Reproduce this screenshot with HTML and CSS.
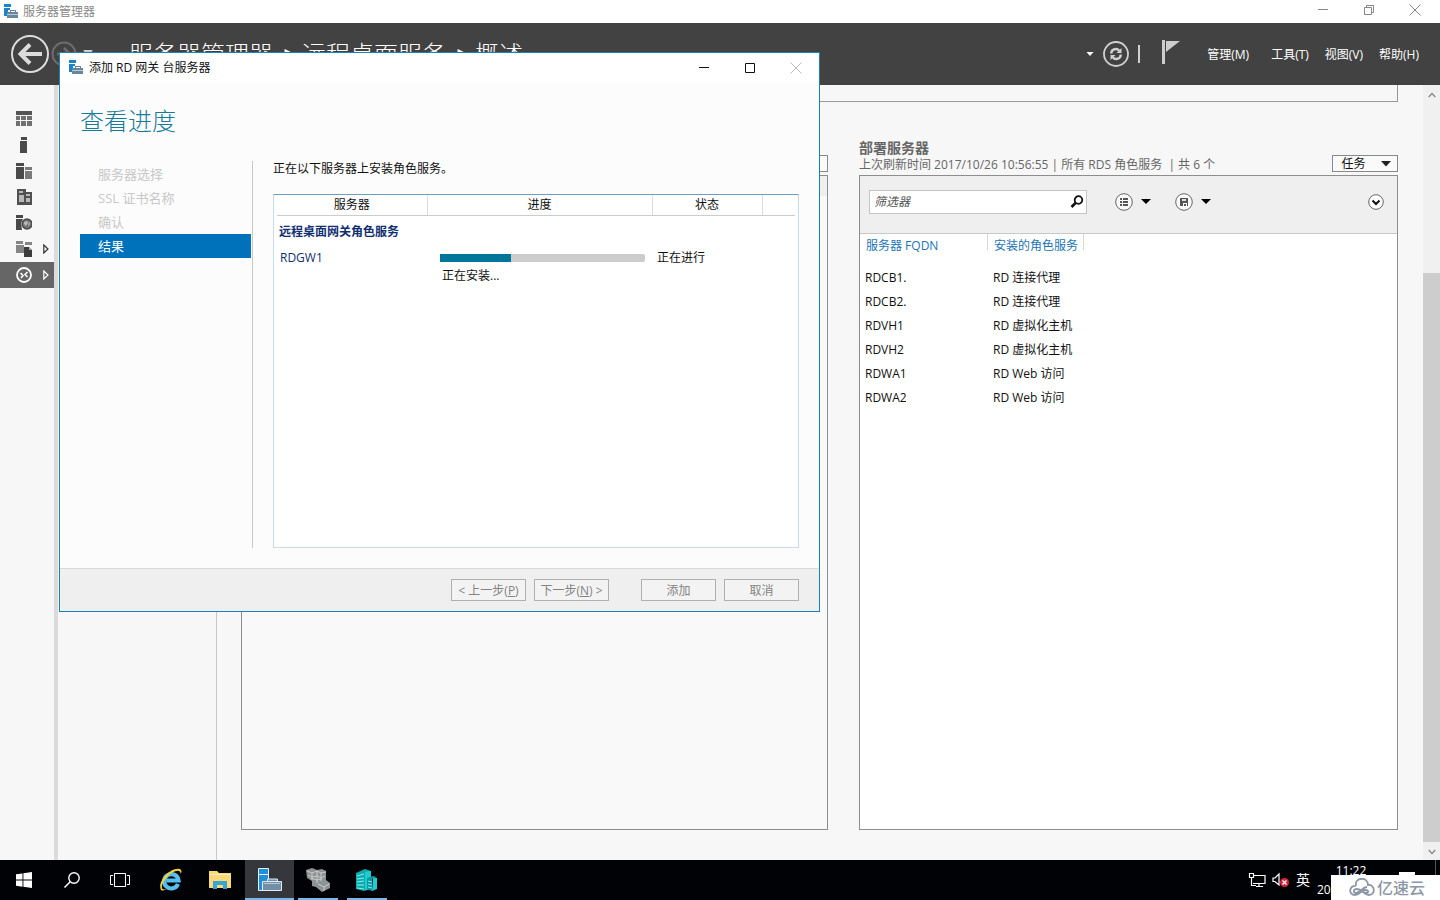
FILE: index.html
```html
<!DOCTYPE html>
<html lang="zh-CN">
<head>
<meta charset="utf-8">
<title>服务器管理器</title>
<link rel="stylesheet" href="styles.css">
</head>
<body>
<svg width="0" height="0" class="defs" aria-hidden="true">
  <symbol id="server" viewBox="0 0 16 16">
    <path d="M1 0h7v3H1zM1 4h6v2H5v6H1z" fill="#1a86c8"/>
    <path d="M4 8h3V6h6v2h2v6H4z" fill="#68879f"/>
    <path d="M8 8V7h4v1z" fill="#fff"/><path d="M4 10.500h11" stroke="#b9cad8"/>
  </symbol>
  <symbol id="close" viewBox="0 0 12 12"><path d="M.5.5l11 11M11.500.5l-11 11" fill="none" stroke="currentColor"/></symbol>
  <symbol id="min" viewBox="0 0 12 12"><path d="M1 5.500h10" fill="none" stroke="currentColor"/></symbol>
  <symbol id="expand" viewBox="0 0 6 10"><path d="M.8 1l4.200 4-4.200 4z" fill="none" stroke="currentColor" stroke-width="1.200"/></symbol>
</svg>

<header class="titlebar">
  <svg class="app-icon"><use href="#server"/></svg>
  <span class="titlebar-text">服务器管理器</span>
  <div class="window-buttons">
    <button aria-label="最小化"><svg class="i12"><use href="#min"/></svg></button>
    <button aria-label="还原"><svg class="i12" viewBox="0 0 12 12"><path d="M1.500 3.500h7v7h-7zM3.500 3V1.500h7v7H9" fill="none" stroke="currentColor"/></svg></button>
    <button aria-label="关闭"><svg class="i12"><use href="#close"/></svg></button>
  </div>
</header>

<nav class="banner">
  <button class="back" aria-label="后退"><svg width="40" height="40" viewBox="0 0 40 40"><circle cx="20" cy="20" r="18" fill="none" stroke="#dcdcdc" stroke-width="2"/><path d="M32 20H11M20 10.500L10.500 20l9.500 9.500" fill="none" stroke="#dcdcdc" stroke-width="4"/></svg></button>
  <button class="forward" aria-label="前进"><svg width="26" height="26" viewBox="0 0 26 26"><circle cx="13" cy="13" r="11.500" fill="none" stroke="#6d6d6d" stroke-width="2"/><path d="M6 13h12M13 7l6 6-6 6" fill="none" stroke="#6d6d6d" stroke-width="2.500"/></svg></button>
  <svg class="history" width="10" height="6" viewBox="0 0 10 6"><path d="M0 0h10L5 6z" fill="#ccc"/></svg>
  <h1 class="crumbs">服务器管理器<i>▸</i>远程桌面服务<i>▸</i>概述</h1>
  <div class="banner-tools">
    <svg width="8" height="5" viewBox="0 0 8 5"><path d="M.5 0h7L4 4z" fill="#fff"/></svg>
    <button aria-label="刷新"><svg width="28" height="28" viewBox="0 0 28 28"><circle cx="14" cy="14" r="12" fill="none" stroke="#d0d0d0" stroke-width="1.800"/><path d="M9.200 13.500c.2-5 6-5.500 8-2.700M18.800 14.500c-.2 5-6 5.500-8 2.700" fill="none" stroke="#d0d0d0" stroke-width="2.400"/><path d="M19.500 8v5h-5zM8.500 20v-5h5z" fill="#d0d0d0"/></svg></button>
    <span class="bar"></span>
    <button class="flag" aria-label="通知"><svg width="18" height="26" viewBox="0 0 18 26"><path d="M0 1h3v24H0zM4 2h14L4 13z" fill="#cdcdcd"/></svg></button>
  </div>
  <div class="menu"><button>管理(M)</button><button>工具(T)</button><button>视图(V)</button><button>帮助(H)</button></div>
</nav>

<main class="workspace">
  <aside class="rail">
    <button aria-label="仪表板"><svg class="i16" viewBox="0 0 16 16"><path d="M0 0h16v4H0z" fill="#555"/><path d="M0 5h4v4H0zM0 10h4v5H0zM5 5h5v4H5zM5 10h5v5H5zM11 5h5v4h-5zM11 10h5v5h-5z" fill="#707070"/></svg></button>
    <button aria-label="本地服务器"><svg class="i16" viewBox="0 0 16 16"><path d="M5 0h6v3H5zM4 4h7v12H4z" fill="#4a4a4a"/></svg></button>
    <button aria-label="所有服务器"><svg class="i16" viewBox="0 0 16 16"><path d="M0 0h8v3H0zM0 4h8v12H0z" fill="#4a4a4a"/><path d="M9 4h7v3H9zM9 8h7v8H9z" fill="#7a7a7a"/></svg></button>
    <button aria-label="文件服务器"><svg class="i16" viewBox="0 0 16 16"><path d="M1 0h9v3h6v13H1z" fill="#505050"/><path d="M3 2h4v2H3zM3 6h5v7H3zM10 5h4v2h-4zM10 9h4v4h-4z" fill="#b8b8b8"/></svg></button>
    <button aria-label="IIS"><svg class="i16" viewBox="0 0 16 16"><path d="M0 0h7v3H0zM0 4h7l-2 4 1 7H0z" fill="#484848"/><circle cx="11" cy="9" r="5" fill="#707070" stroke="#484848" stroke-width="1.300"/><path d="M8 7l3-1 1 2-2 3-2-2zM13 6l1 3-2 3" fill="#bbb"/></svg></button>
    <button aria-label="文件和存储服务"><svg class="i16" viewBox="0 0 16 16"><path d="M0 0h7v3H0zM0 4h8v8H0zM9 1h7v3H9z" fill="#858585"/><path d="M8 6h5l3 3v7H8z" fill="#3c3c3c"/><path d="M13 6v3h3" fill="#aaa"/></svg><svg class="expand"><use href="#expand"/></svg></button>
    <button class="active" aria-label="远程桌面服务"><svg class="i16" viewBox="0 0 16 16"><circle cx="8" cy="8" r="7" fill="none" stroke="#fff" stroke-width="1.800"/><path d="M4.500 6l2.500 2.500L5 11M11.500 5L9 7.500l2.500 2.500" fill="none" stroke="#fff" stroke-width="1.600"/></svg><svg class="expand"><use href="#expand"/></svg></button>
  </aside>
  <aside class="subnav"></aside>
  <section class="content">
    <div class="overview"></div>
    <div class="panels">
      <section class="panel-group">
        <div class="panel-head"><span class="task-button"></span></div>
        <div class="panel plain"><div class="filter-row"></div></div>
      </section>
      <section class="panel-group">
        <div class="panel-head">
          <div class="panel-title"><h2>部署服务器</h2><p>上次刷新时间 2017/10/26 10:56:55 | 所有 RDS 角色服务&nbsp; | 共 6 个</p></div>
          <button class="task-button">任务<svg width="10" height="6" viewBox="0 0 10 6"><path d="M0 0h10L5 5.500z" fill="#222"/></svg></button>
        </div>
        <div class="panel">
          <div class="filter-row">
            <label class="search"><input type="text" placeholder="筛选器" aria-label="筛选器"><svg width="14" height="14" viewBox="0 0 14 14"><circle cx="8.500" cy="5" r="3.800" fill="none" stroke="#111" stroke-width="1.800"/><path d="M5.800 7.800L1.500 12" stroke="#111" stroke-width="2.600"/></svg></label>
            <button class="round-tool" aria-label="分组"><svg width="18" height="18" viewBox="0 0 18 18"><circle cx="9" cy="9" r="8.300" fill="#fafafa" stroke="#666"/><path d="M5 5h2v2H5zM5 8h2v2H5zM5 11h2v2H5zM8 5h5v2H8zM8 8h5v2H8zM8 11h5v2H8z" fill="#555"/></svg><svg width="10" height="6" viewBox="0 0 10 6"><path d="M0 0h10L5 5z"/></svg></button>
            <button class="round-tool" aria-label="保存"><svg width="18" height="18" viewBox="0 0 18 18"><circle cx="9" cy="9" r="8.300" fill="#fafafa" stroke="#666"/><path d="M5 5h8v8h-1v-3H8v3H5z" fill="#555"/><path d="M7 6h4v2H7z" fill="#ddd"/><path d="M9 11h2v2H9z" fill="#555"/></svg><svg width="10" height="6" viewBox="0 0 10 6"><path d="M0 0h10L5 5z"/></svg></button>
            <button class="collapse" aria-label="展开"><svg width="16" height="16" viewBox="0 0 16 16"><circle cx="8" cy="8" r="7.300" fill="#fff" stroke="#666"/><path d="M4.500 6.500L8 10l3.500-3.500" fill="none" stroke="#111" stroke-width="2"/></svg></button>
          </div>
          <table class="servers">
            <colgroup><col class="c-name"><col class="c-role"><col></colgroup>
            <thead><tr><th><span>服务器 FQDN</span></th><th><span>安装的角色服务</span></th><th></th></tr></thead>
            <tbody>
              <tr><td><span>RDCB1.</span></td><td>RD 连接代理</td><td></td></tr>
              <tr><td><span>RDCB2.</span></td><td>RD 连接代理</td><td></td></tr>
              <tr><td><span>RDVH1</span></td><td>RD 虚拟化主机</td><td></td></tr>
              <tr><td><span>RDVH2</span></td><td>RD 虚拟化主机</td><td></td></tr>
              <tr><td><span>RDWA1</span></td><td>RD Web 访问</td><td></td></tr>
              <tr><td><span>RDWA2</span></td><td>RD Web 访问</td><td></td></tr>
            </tbody>
          </table>
        </div>
      </section>
    </div>
  </section>
  <div class="scrollbar">
    <svg width="8" height="6" viewBox="0 0 8 6"><path d="M.7 5L4 1.500 7.300 5" fill="none" stroke="#888" stroke-width="1.300"/></svg>
    <span class="thumb"></span>
    <svg width="8" height="6" viewBox="0 0 8 6"><path d="M.7 1L4 4.500 7.300 1" fill="none" stroke="#888" stroke-width="1.300"/></svg>
  </div>
</main>

<div class="dialog" role="dialog" aria-label="添加 RD 网关 台服务器">
  <div class="dialog-bar">
    <svg class="app-icon"><use href="#server"/></svg><span>添加 RD 网关 台服务器</span>
    <div class="window-buttons">
      <button aria-label="最小化"><svg class="i12"><use href="#min"/></svg></button>
      <button aria-label="最大化"><svg class="i12" viewBox="0 0 12 12"><path d="M1.500 1.500h9v9h-9z" fill="none" stroke="currentColor"/></svg></button>
      <button class="off" aria-label="关闭" disabled><svg class="i12"><use href="#close"/></svg></button>
    </div>
  </div>
  <h2 class="dialog-title">查看进度</h2>
  <div class="dialog-body">
    <ol class="steps"><li>服务器选择</li><li>SSL 证书名称</li><li>确认</li><li class="current">结果</li></ol>
    <div class="progress-side">
      <p>正在以下服务器上安装角色服务。</p>
      <div class="list">
        <table>
          <colgroup><col class="p-server"><col class="p-progress"><col class="p-state"><col></colgroup>
          <thead><tr><th>服务器</th><th>进度</th><th>状态</th><th></th></tr></thead>
          <tbody>
            <tr class="group"><td colspan="4">远程桌面网关角色服务</td></tr>
            <tr class="job"><td>RDGW1</td><td><div class="meter"><div class="meter-fill" style="width:34.6%"></div></div></td><td>正在进行</td><td></td></tr>
            <tr class="note"><td></td><td>正在安装...</td><td></td><td></td></tr>
          </tbody>
        </table>
      </div>
    </div>
  </div>
  <footer class="dialog-footer">
    <button disabled>&lt; 上一步(<u>P</u>)</button><button disabled>下一步(<u>N</u>) &gt;</button><button class="apart" disabled>添加</button><button disabled>取消</button>
  </footer>
</div>

<footer class="taskbar">
  <button aria-label="开始"><svg width="16" height="16" viewBox="0 0 16 16"><path d="M0 2.300L6.500 1.400v6.200H0zM7.400 1.300L16 0v7.600H7.400zM0 8.500h6.500v6.200L0 13.800zM7.400 8.500H16V16l-8.600-1.200z" fill="#fff"/></svg></button>
  <button aria-label="搜索"><svg width="18" height="18" viewBox="0 0 18 18"><circle cx="11" cy="7" r="5.200" fill="none" stroke="#fff" stroke-width="1.400"/><path d="M7.200 10.800L1.500 16.500" stroke="#fff" stroke-width="1.500"/></svg></button>
  <button aria-label="任务视图"><svg width="22" height="16" viewBox="0 0 22 16"><path d="M5.500 1.500h11v13h-11zM4 3.500H1.500v9H4M18 3.500h2.500v9H18" fill="none" stroke="#fff"/></svg></button>
  <button class="app" aria-label="Internet Explorer"><svg width="24" height="24" viewBox="0 0 24 24"><path d="M19 16A7.200 7.200 0 1 1 19.500 12.500H7.500" fill="none" stroke="#55c0f0" stroke-width="4.200"/><path d="M2 22C-2 15 9 1 19 .8c4-.1 4 3 2.600 5.200C22 2 18 1.500 13 4.800 7 8.800 2 16 3 20c.6 2 3 1.500 5 .5-2.500 2-5 2.600-6 1.500z" fill="#f2d13c"/></svg></button>
  <button class="app" aria-label="文件资源管理器"><svg width="22" height="20" viewBox="0 0 22 20"><path d="M0 1h8l2 2h12v15H0z" fill="#f9d978"/><path d="M1 4h20v1H1z" fill="#fff0b8"/><path d="M4 11h14v8h-4v-4H8v4H4z" fill="#38a3d6"/></svg></button>
  <button class="app focused" aria-label="服务器管理器"><svg width="24" height="24" viewBox="0 0 24 24"><path d="M.5.5h10v22H.5zM.5 6.500h10" fill="#218ed8" stroke="#e3f3ff"/><path d="M4.500 13.500h19v9h-19zM9.500 13v-2h10v2" fill="#7190a8" stroke="#dfeaf3"/><path d="M6 15.500h16" stroke="#b8cad8"/></svg></button>
  <button class="app running" aria-label="服务器组"><svg width="24" height="24" viewBox="0 0 24 24"><path d="M0 2l6-2 5 2 5-1 4 2v9l4 3v5l-8 4-6-5-4-1v-5L1 10z" fill="#8f9292"/><path d="M1 3l5 2 5-2 4 2 5-1M6 5v7M11 3v12M15 5v8M5 10l6 2 5-1M12 16l6 3 5-3M18 19v4M2 7l4 2 5-1 4 2 4-2" fill="none" stroke="#c8cccc"/></svg></button>
  <button class="app running" aria-label="群集"><svg width="24" height="24" viewBox="0 0 24 24"><path d="M1 5l9-4 6 2v18l-7 2-8-2z" fill="#0cabb2"/><path d="M10 4l6-1v18l-6 1zM18 10l4 0v11l-5 2z" fill="#20ccd0"/><path d="M12 10l6-2 4 1-5 2v12l-5-2z" fill="#079aa1"/><path d="M2 8l7-2M2 11l7-1M2 14l7-1M2 17l7 0M2 20l7 1M13 13l4 1M13 16l4 1M13 19l4 1" stroke="#8cecec"/></svg></button>
  <div class="tray">
    <svg width="18" height="16" viewBox="0 0 18 16"><path d="M6 3.500h11v8H5M11 12v3M8 14.500h7M1.500 1.500h4v4h-4zM3.500 6v7.500H8" fill="none" stroke="#fff" stroke-width="1.200"/></svg>
    <svg class="sound" width="18" height="16" viewBox="0 0 18 16"><path d="M1 6h2l4-4v11L3 9.500H1z" fill="none" stroke="#fff" stroke-width="1.200"/><circle cx="12.500" cy="10.500" r="4.500" fill="#d8203c"/><path d="M10.500 8.500l4 4M14.500 8.500l-4 4" stroke="#fff" stroke-width="1.300"/></svg>
    <span class="lang">英</span>
    <div class="clock"><span>11:22</span><span class="date">20</span></div>
    <span class="notice"></span>
    <span class="peek"></span>
  </div>
</footer>
<div class="watermark"><svg width="26" height="20" viewBox="0 0 26 20"><path d="M7 8C5-1 19-2 19 7c7-1 8 10 1 10-5 0-7-6-12-6-4 0-4 4-1 4 5 0 6-6 11-6M7 8C0 7-1 17 6 17c5 0 6-5 10-5 4 0 4 3 1 3-2 0-3-1-4-2" fill="none" stroke="#8d96a6" stroke-width="1.800"/></svg><span>亿速云</span></div>
</body>
</html>
```
FILE: styles.css
```css
* { box-sizing: border-box; }
body { margin: 0; height: 100vh; display: flex; flex-direction: column; overflow: hidden; position: relative; background: #f7f7f7; color: #111; font: 12px/16px "Open Sans", "Noto Sans CJK SC", sans-serif; }
h1, h2, p, ol { margin: 0; padding: 0; }
button { margin: 0; padding: 0; border: 0; background: none; color: inherit; font: inherit; display: flex; align-items: center; justify-content: center; }
svg { flex: none; }
table { border-collapse: collapse; table-layout: fixed; width: 100%; }
th { font-weight: 400; }
th, td { padding: 0; }
.defs { position: absolute; }
.app-icon, .i16 { width: 16px; height: 16px; }
.i12 { width: 12px; height: 12px; }

.titlebar { flex: none; height: 23px; display: flex; align-items: center; gap: 4px; padding-left: 3px; background: #fff; color: #888; }
.window-buttons { display: flex; margin-left: auto; }
.window-buttons button { width: 46px; height: 20px; }
.titlebar .window-buttons { height: 23px; padding-right: 2px; }

.banner { flex: none; height: 62px; display: flex; align-items: center; background: #424242; color: #fff; padding: 0 21px 0 10px; }
.forward { margin-left: 1px; }
.history { margin: 0 0 2px 6px; }
.crumbs { margin-left: 36px; font-size: 24px; line-height: 32px; font-weight: 300; white-space: nowrap; }
.crumbs i { display: inline-block; width: 29px; text-align: center; font: 12px/12px "DejaVu Sans", sans-serif; vertical-align: 8px; }
.banner-tools { margin-left: auto; display: flex; align-items: center; gap: 8px; }
.bar { width: 2px; height: 18px; background: #d0d0d0; }
.flag { margin: 0 27px 4px 14px; }
.menu { display: flex; gap: 16px; padding-top: 2px; }
.menu button:first-child { margin-right: 6px; }

.workspace { flex: 1; min-height: 0; display: flex; }
.rail { flex: none; width: 58px; border-right: 4px solid #dcdada; padding-top: 21px; }
.rail button { position: relative; width: 100%; height: 26px; justify-content: flex-start; padding-left: 16px; gap: 11px; color: #333; }
.rail .active { background: #666; color: #fff; }
.expand { width: 6px; height: 10px; }
.subnav { flex: none; width: 159px; border-right: 1px solid #c8c8c8; }
.content { flex: 1; min-width: 0; display: flex; flex-direction: column; padding: 0 25px 30px 24px; }
.overview { flex: none; height: 17px; border: solid #999; border-width: 0 1px 1px; }
.panels { flex: 1; min-height: 0; display: grid; grid-template-columns: 587fr 539fr; gap: 31px; padding-top: 36px; }
.panel-group { display: flex; flex-direction: column; min-width: 0; }
.panel-head { flex: none; height: 37px; display: flex; align-items: flex-end; justify-content: space-between; padding-bottom: 3px; }
.panel-title { color: #666; }
.panel-title h2 { font-size: 14px; line-height: 20px; font-weight: 700; }
.panel-title p { line-height: 14px; white-space: nowrap; }
.task-button { width: 66px; height: 17px; border: 1px solid #888; background: #fafafa; gap: 15px; margin-left: auto; padding-left: 2px; }
.panel { flex: 1; border: 1px solid #8d8d8d; background: #fff; }
.panel.plain { background: #f9f9f9; }
.filter-row { height: 58px; display: flex; align-items: center; padding: 0 13px 5px 9px; background: #efefef; border-bottom: 1px solid #c8c8c8; }
.plain .filter-row { height: 20px; border: 0; }
.search { width: 218px; height: 24px; display: flex; align-items: center; background: #fff; border: 1px solid #c4c4c4; padding: 0 2px 0 4px; margin-right: 28px; }
.search input { flex: 1; min-width: 0; border: 0; outline: 0; padding: 0; background: none; font: italic 12px/16px "Open Sans", "Noto Sans CJK SC", sans-serif; }
.search input::placeholder { color: #555; opacity: 1; }
.round-tool { gap: 8px; margin-right: 24px; }
.collapse { margin-left: auto; }
.servers .c-name { width: 128px; }
.servers .c-role { width: 96px; }
.servers th { height: 32px; text-align: left; vertical-align: top; color: #1b74b4; }
.servers th span { display: block; height: 16px; padding: 4px 0 0 6px; border-right: 1px solid #d8d8d8; white-space: nowrap; line-height: 16px; }
.servers td { height: 24px; padding-left: 5px; white-space: nowrap; }
.servers td span { display: block; width: 41px; overflow: hidden; }
.scrollbar { flex: none; width: 17px; display: flex; flex-direction: column; align-items: center; padding: 7px 0 5px; background: #f0f0f0; }
.thumb { width: 100%; height: 74.6%; margin-top: auto; margin-bottom: 7px; background: #cdcdcd; }

.dialog { position: absolute; left: 59px; top: 52px; width: 761px; height: 560px; display: flex; flex-direction: column; background: #fcfcfc; border: 1px solid #1883b8; }
.dialog-bar { flex: none; height: 30px; display: flex; align-items: center; gap: 5px; padding-left: 8px; background: #fff; }
.dialog-bar .off { color: #bbb; }
.dialog-title { padding: 22px 20px 0; font-size: 24px; line-height: 32px; font-weight: 300; color: #167a9b; }
.dialog-body { flex: 1; min-height: 0; display: flex; padding: 24px 20px 20px; }
.steps { flex: none; width: 173px; border-right: 1px solid #c8c8c8; padding: 1px 1px 0 0; list-style: none; color: #c8c8c8; font-size: 13px; line-height: 24px; }
.steps li { padding-left: 18px; }
.steps .current { background: #0072bc; color: #fff; }
.progress-side { flex: 1; display: flex; flex-direction: column; gap: 17px; padding-left: 20px; }
.list { flex: 1; border: 1px solid #c5dceb; border-top-color: #6f9dbd; background: #fff; padding: 0 3px; }
.p-server { width: 150px; }
.p-progress { width: 225px; }
.p-state { width: 110px; }
.list th { height: 20px; border-right: 1px solid #ddd; border-bottom: 1px solid #ccc; }
.list th:last-child { border-right: 0; }
.group td { height: 33px; padding-left: 2px; font-weight: 700; color: #12306f; }
.job td { height: 20px; color: #111; }
.job td:first-child { padding-left: 3px; color: #12306f; }
.job td:nth-child(3) { padding-left: 5px; }
.meter { margin-left: 13px; width: 205px; height: 8px; background: #ccc; border-radius: 0 2px 2px 0; }
.meter-fill { height: 100%; background: #00759a; }
.note td { padding-left: 15px; }
.dialog-footer { flex: none; height: 43px; display: flex; align-items: center; justify-content: flex-end; gap: 8px; padding-right: 20px; background: #efefef; border-top: 1px solid #dadada; }
.dialog-footer button { width: 75px; height: 22px; padding-top: 2px; border: 1px solid #b0b0b0; background: #f3f3f3; color: #838383; white-space: pre; }
.dialog-footer .apart { margin-left: 24px; }

.taskbar { flex: none; height: 40px; display: flex; background: #010206; color: #fff; }
.taskbar > button { width: 48px; height: 40px; }
.taskbar > .app { width: 49px; }
.taskbar > .app:nth-child(4) { margin-left: 2px; }
.taskbar > .app:nth-child(5) { margin-right: 1px; }
.taskbar > .focused { background: #35373d; box-shadow: inset 0 -2px #76b9ed; }
.taskbar > .running { width: 40px; margin-left: 4px; margin-right: 5px; box-shadow: inset 0 -2px #76b9ed; }
.tray { margin-left: auto; display: flex; align-items: center; }
.sound { margin-left: 6px; }
.lang { margin-left: 6px; font-size: 14px; }
.clock { margin-left: 7px; width: 68px; height: 40px; display: flex; flex-direction: column; align-items: center; gap: 3px; padding-top: 3px; }
.date { align-self: flex-start; }
.notice { align-self: flex-start; margin: 12px 20px 0 14px; width: 16px; height: 4px; background: #fff; }
.peek { align-self: flex-start; width: 5px; height: 15px; border-left: 1px solid #555; }
.watermark { position: absolute; right: 0; bottom: 0; width: 109px; height: 25px; display: flex; align-items: center; gap: 2px; padding-left: 18px; background: #fff; color: #8d96a6; font-size: 16px; line-height: 20px; font-weight: 500; white-space: nowrap; }
```
